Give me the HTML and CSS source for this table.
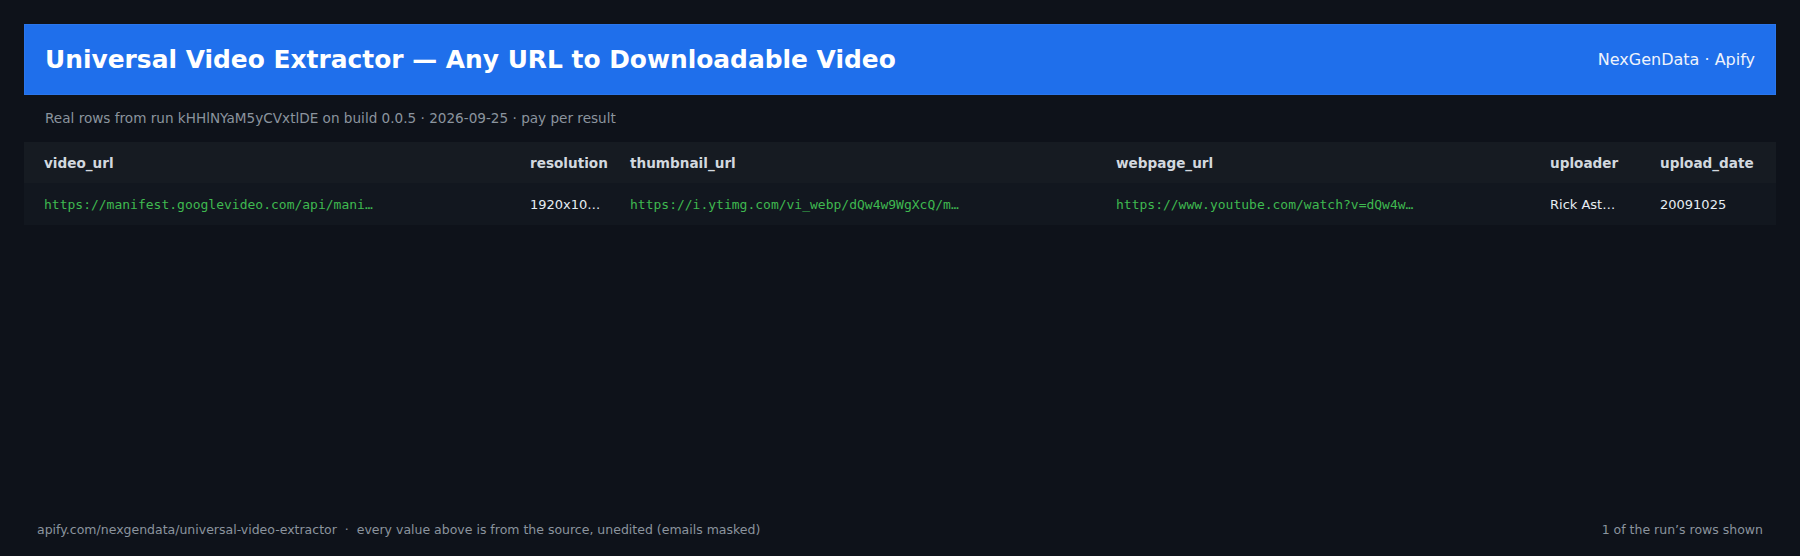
FILE: index.html
```html
<!DOCTYPE html>
<html lang="en">
<head>
<meta charset="utf-8">
<title>Universal Video Extractor</title>
<link rel="stylesheet" href="styles.css">
</head>
<body>
<header class="banner">
  <h1 class="title">Universal Video Extractor — Any URL to Downloadable Video</h1>
  <div class="brand">NexGenData · Apify</div>
</header>
<p class="sub">Real rows from run kHHlNYaM5yCVxtlDE on build 0.0.5 · 2026-09-25 · pay per result</p>
<table class="data">
  <thead>
    <tr>
      <th class="c-video">video_url</th>
      <th class="c-res">resolution</th>
      <th class="c-thumb">thumbnail_url</th>
      <th class="c-page">webpage_url</th>
      <th class="c-up">uploader</th>
      <th class="c-date">upload_date</th>
    </tr>
  </thead>
  <tbody>
    <tr>
      <td class="url">https://manifest.googlevideo.com/api/mani…</td>
      <td>1920x10…</td>
      <td class="url">https://i.ytimg.com/vi_webp/dQw4w9WgXcQ/m…</td>
      <td class="url">https://www.youtube.com/watch?v=dQw4w…</td>
      <td>Rick Ast…</td>
      <td>20091025</td>
    </tr>
  </tbody>
</table>
<footer class="foot">
  <span>apify.com/nexgendata/universal-video-extractor &nbsp;·&nbsp; every value above is from the source, unedited (emails masked)</span>
  <span>1 of the run’s rows shown</span>
</footer>
</body>
</html>
```

FILE: styles.css
```css
html, body {
  height: 100%;
}
body {
  margin: 0;
  padding: 24px 24px 18px;
  box-sizing: border-box;
  background: #0e121a;
  color: #e6edf3;
  font-family: "DejaVu Sans", "Liberation Sans", sans-serif;
  display: flex;
  flex-direction: column;
}
.banner {
  height: 71px;
  box-sizing: border-box;
  background: #1f6feb;
  border: 1px solid #2a76ec;
  padding: 0 20px 0 20px;
  display: flex;
  align-items: center;
  justify-content: space-between;
}
.title {
  margin: 0;
  font-size: 24.9px;
  font-weight: bold;
  color: #ffffff;
}
.brand {
  font-size: 16px;
  color: #eef3fc;
}
.sub {
  margin: 13px 0 14px 21px;
  font-size: 13.6px;
  line-height: 20px;
  color: #8b949e;
}
.data {
  width: 100%;
  table-layout: fixed;
  border-collapse: collapse;
  background: #12171f;
}
.data th, .data td {
  padding: 0 21px 0 20px;
  text-align: left;
  white-space: nowrap;
  overflow: hidden;
}
.data th {
  height: 41px;
  background: #161b22;
  font-size: 13.6px;
  font-weight: bold;
  color: #d2d8df;
}
.data td {
  height: 42px;
  font-size: 13px;
  color: #e6edf3;
}
.data td.url {
  font-family: "DejaVu Sans Mono", "Liberation Mono", monospace;
  color: #3fb950;
}
.c-video { width: 445px; }
.c-res { width: 59px; }
.c-thumb { width: 445px; }
.c-page { width: 393px; }
.c-up { width: 69px; }
.foot {
  margin-top: auto;
  padding: 0 13px 0 13px;
  display: flex;
  justify-content: space-between;
  font-size: 12.5px;
  line-height: 16px;
  color: #8b949e;
}
```
